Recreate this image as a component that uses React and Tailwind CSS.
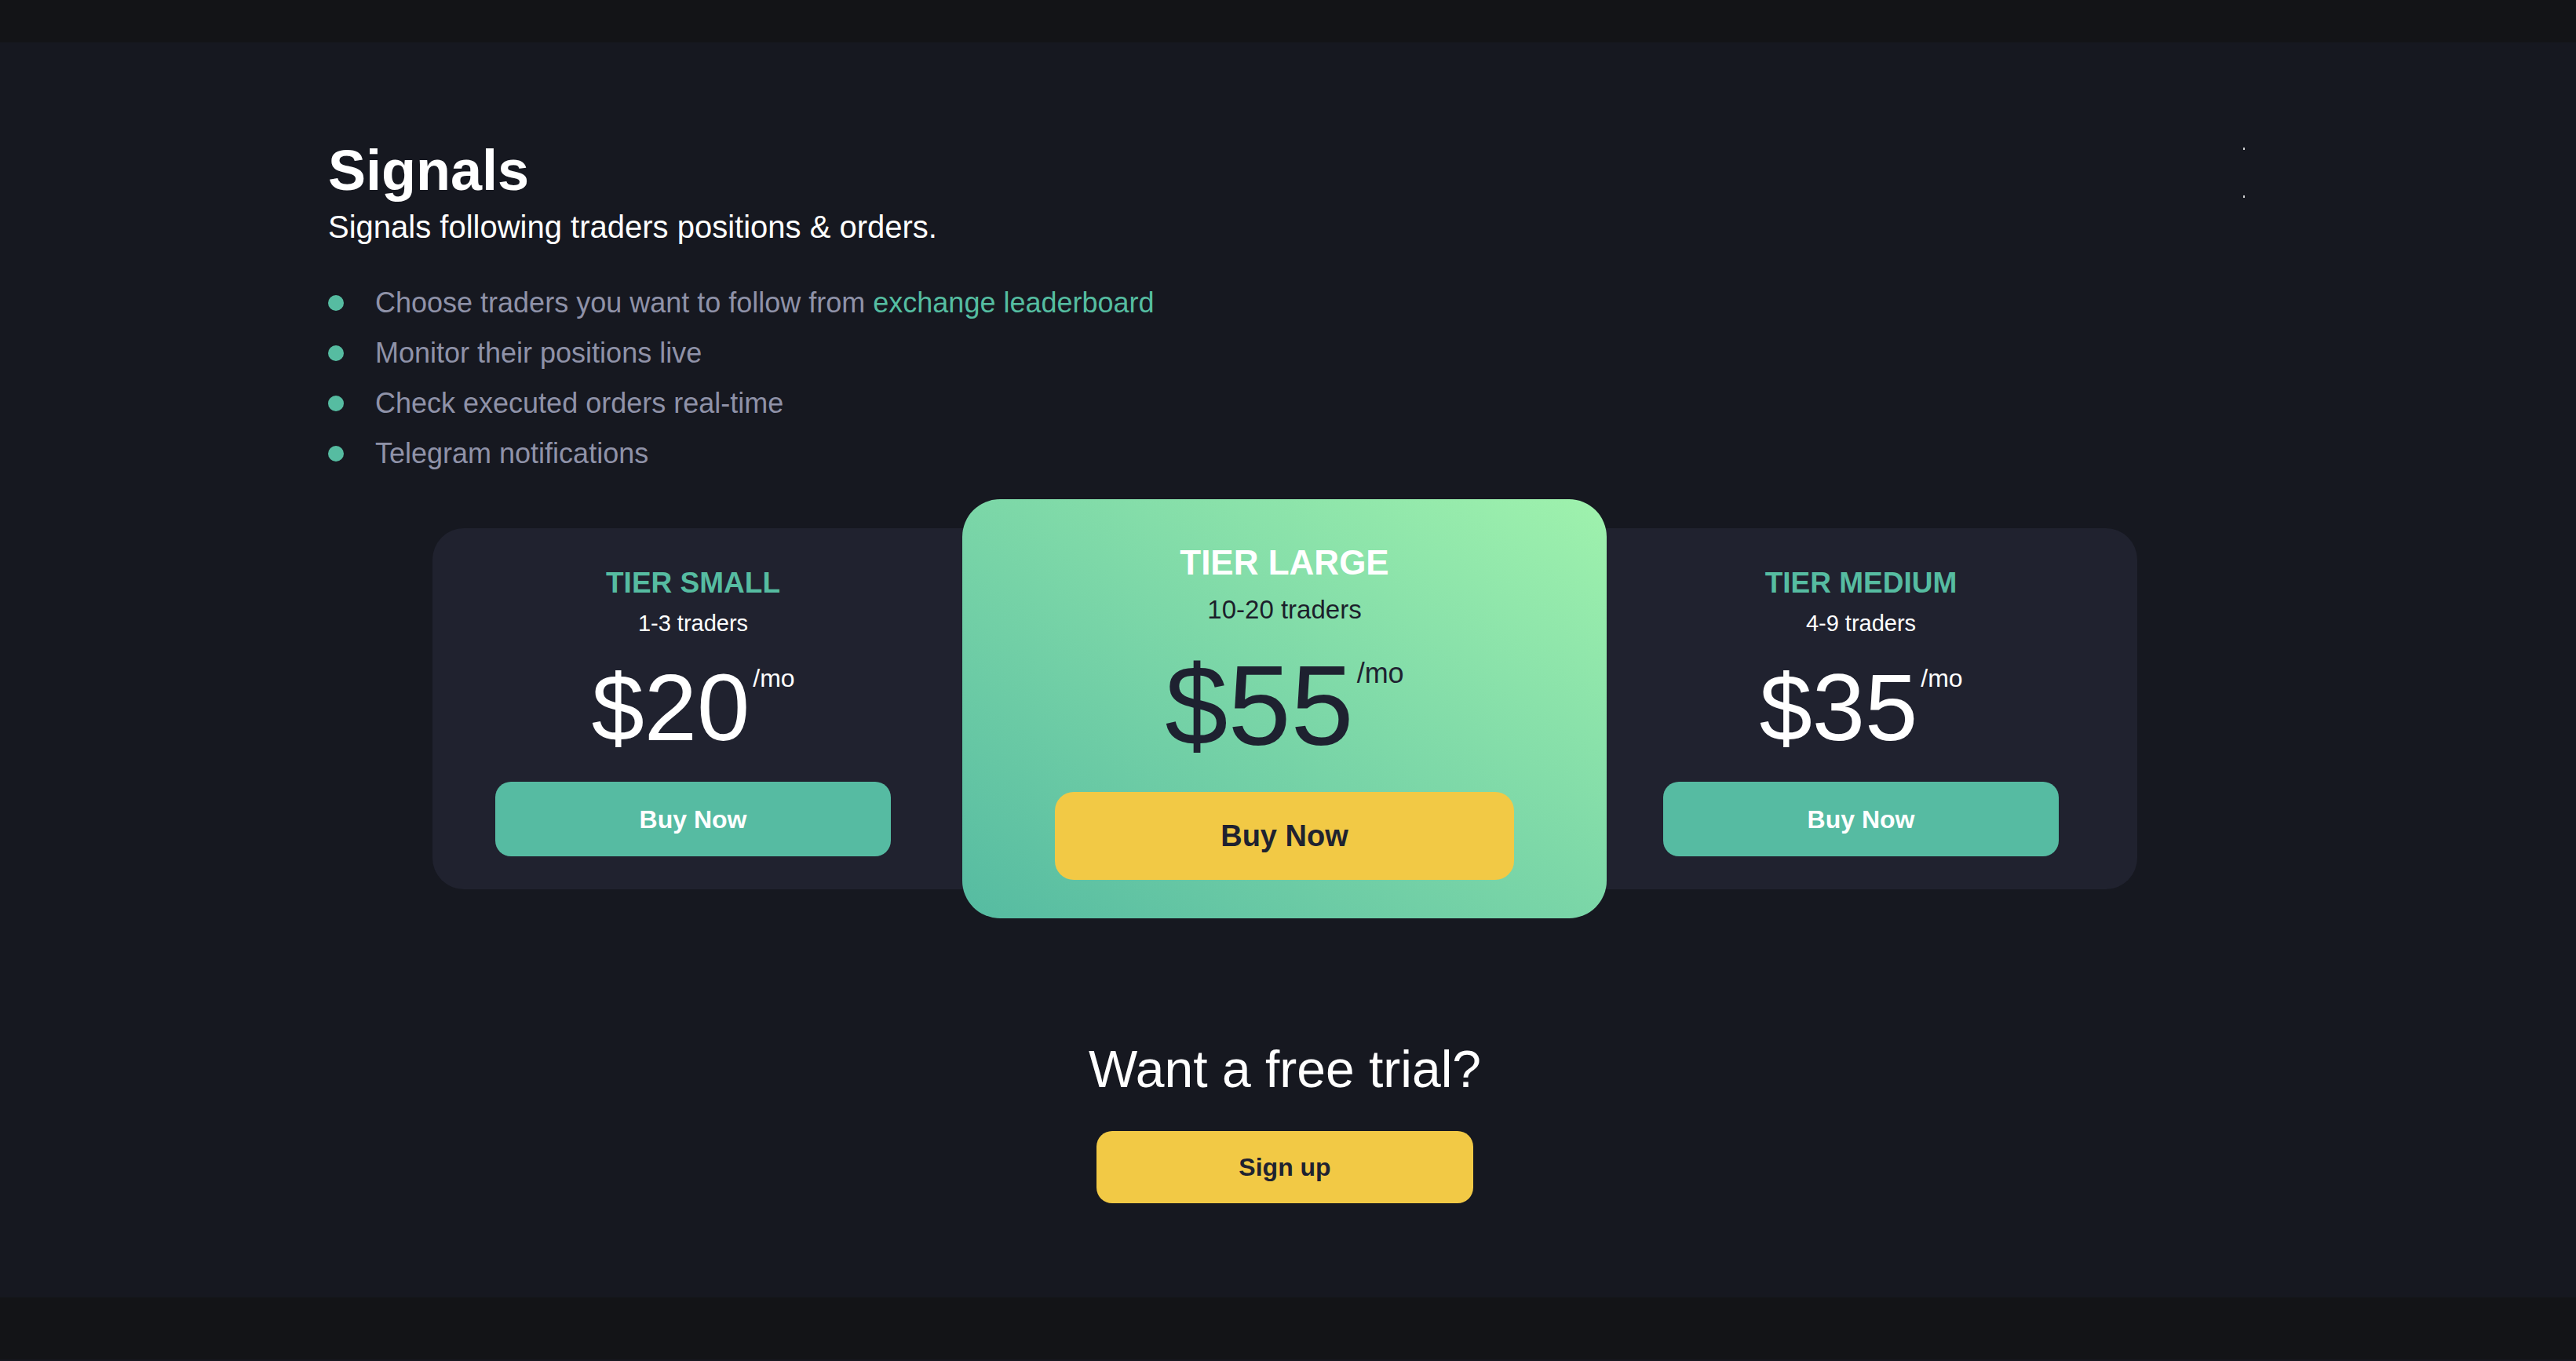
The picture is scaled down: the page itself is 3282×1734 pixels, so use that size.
const features = [
  { text: 'Choose traders you want to follow from ', link: 'exchange leaderboard' },
  { text: 'Monitor their positions live' },
  { text: 'Check executed orders real-time' },
  { text: 'Telegram notifications' },
];

function Price({ value, big }) {
  return (
    <div className={`flex items-start ${big ? 'mt-[35px] text-[#1e2130]' : 'mt-[32px] text-white'}`}>
      <span className={big ? 'text-[144px] leading-none' : 'text-[121px] leading-none'}>${value}</span>
      <span className={big ? 'ml-[4px] mt-[12px] text-[36px] leading-none' : 'ml-[4px] mt-[7px] text-[32px] leading-none'}>/mo</span>
    </div>
  );
}

function SideCard({ title, traders, price, className }) {
  return (
    <div className={`rounded-[40px] bg-[#20222f] pt-[51px] pb-[42px] ${className}`}>
      <div className="flex w-[504px] flex-col items-center">
        <h3 className="text-[37px] font-bold leading-none text-[#56bca1]">{title}</h3>
        <p className="mt-[19px] text-[29px] leading-none text-white">{traders}</p>
        <Price value={price} />
        <button className="mt-[34px] h-[95px] w-full rounded-[20px] bg-[#56bba2] text-[32px] font-bold text-white">
          Buy Now
        </button>
      </div>
    </div>
  );
}

export default function App() {
  return (
    <div className="min-h-screen bg-[#161820] font-['Liberation_Sans',Arial,sans-serif]">
      <div className="h-[54px] bg-[#131417]" />

      <main className="relative pl-[418px] pr-[426px] pt-[127px] pb-[120px]">
        <span className="absolute left-[2858px] top-[134px] h-[3px] w-[2px] bg-white/80" />
        <span className="absolute left-[2858px] top-[195px] h-[3px] w-[2px] bg-white/80" />

        <h1 className="text-[72px] font-bold leading-none text-white">Signals</h1>
        <p className="mt-[16px] text-[40px] leading-none text-white">Signals following traders positions &amp; orders.</p>

        <ul className="mt-[45px]">
          {features.map((f) => (
            <li key={f.text} className="flex h-[64px] items-center text-[36px] text-[#8f92a8]">
              <span className="mr-[40px] h-[20px] w-[20px] rounded-full bg-[#56bca1]" />
              <span>
                {f.text}
                {f.link && <a className="text-[#55bda1]">{f.link}</a>}
              </span>
            </li>
          ))}
        </ul>

        <div className="mt-[26px] flex items-center justify-center">
          <SideCard title="TIER SMALL" traders="1-3 traders" price="20" className="-mr-[45px] w-[720px] pl-[80px]" />

          <div className="relative z-10 flex w-[821px] flex-col items-center rounded-[48px] bg-linear-to-tr from-[#55bba1] to-[#9ff2ad] pt-[59px] pb-[49px]">
            <h3 className="text-[44px] font-bold leading-none text-white">TIER LARGE</h3>
            <p className="mt-[21px] text-[33px] leading-none text-[#1c1f2b]">10-20 traders</p>
            <Price value="55" big />
            <button className="mt-[37px] h-[112px] w-[585px] rounded-[24px] bg-[#f2c945] text-[38px] font-bold text-[#1f2230]">
              Buy Now
            </button>
          </div>

          <SideCard title="TIER MEDIUM" traders="4-9 traders" price="35" className="-ml-[47px] w-[723px] pl-[119px]" />
        </div>

        <div className="flex flex-col items-center">
          <h2 className="mt-[159px] text-[66px] leading-none text-white">Want a free trial?</h2>
          <button className="mt-[46px] h-[92px] w-[480px] rounded-[20px] bg-[#f2c945] text-[32px] font-bold text-[#1f2230]">
            Sign up
          </button>
        </div>
      </main>

      <div className="h-[79px] bg-[#131417]" />
    </div>
  );
}
